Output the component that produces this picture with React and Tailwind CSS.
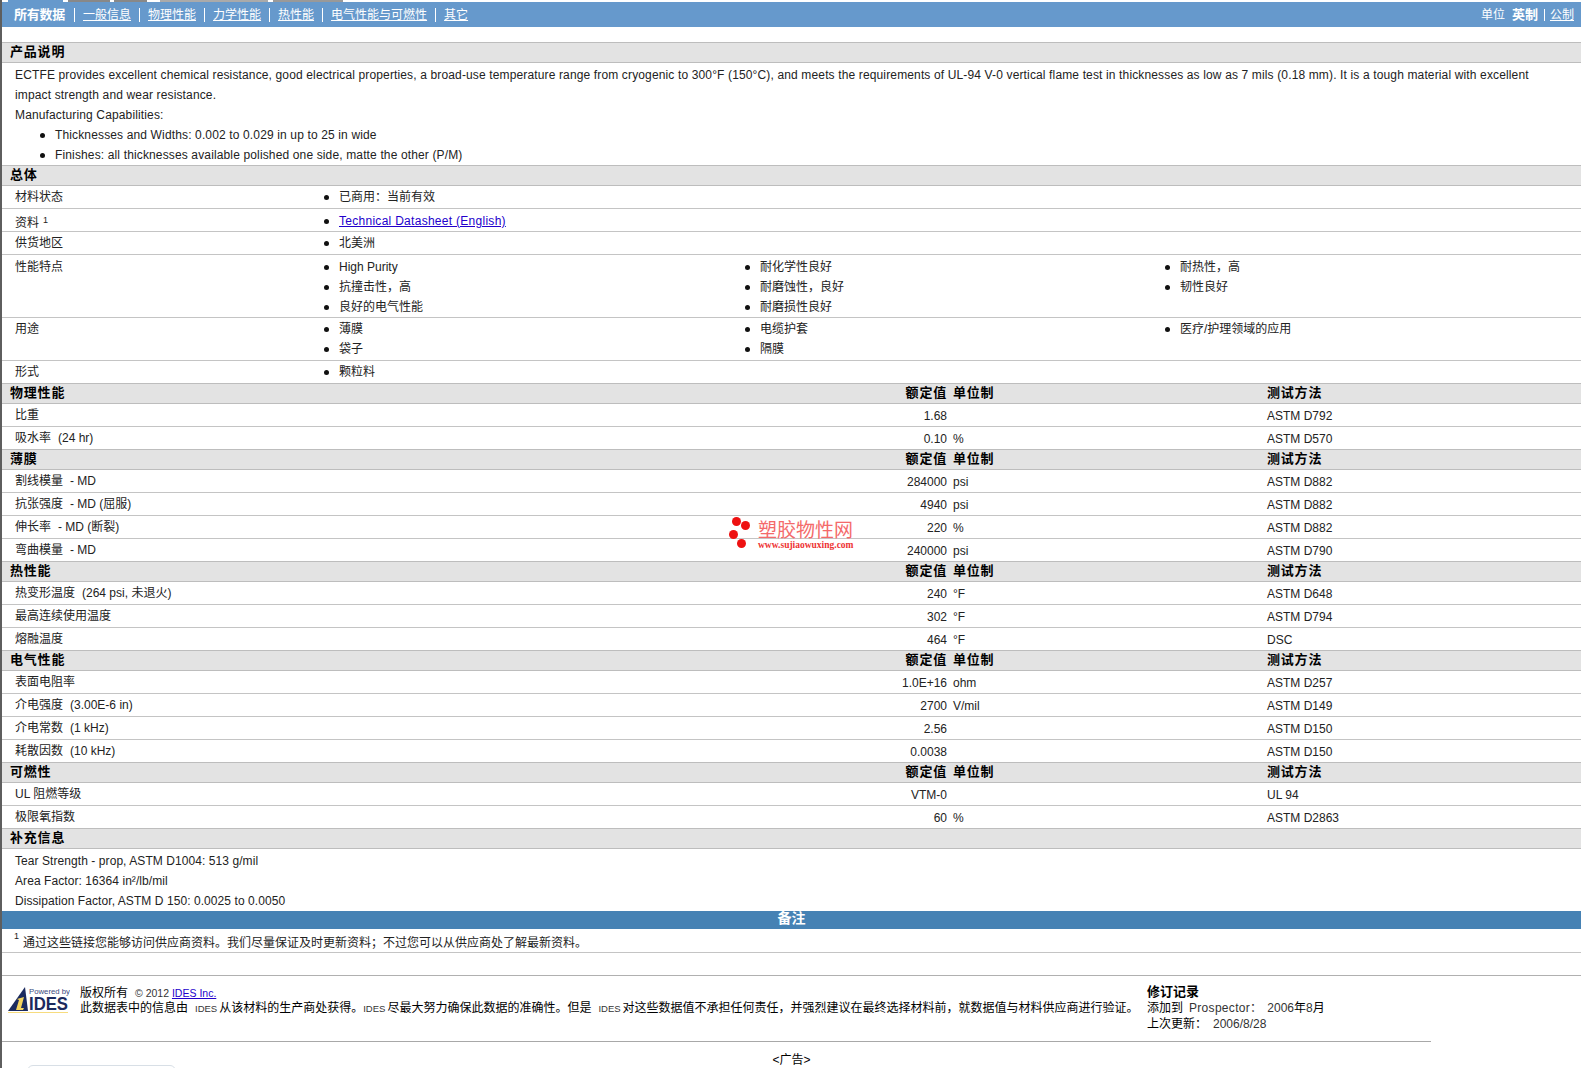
import React from "react";

const Dot = () => <span className="block w-[5px] h-[5px] rounded-full bg-[#111] shrink-0" />;

function Item({ children }) {
  return (
    <div className="flex items-center h-5 gap-[10px]">
      <Dot />
      <span>{children}</span>
    </div>
  );
}

function Header({ title, cols }) {
  return (
    <div className="flex items-center h-[21px] pb-px bg-[#e3e3e3] border-y border-[#bdbdbd] font-bold text-[13px] tracking-[0.8px] text-black">
      <span className="pl-2 w-[650px]">{title}</span>
      {cols && (
        <>
          <span className="w-[295px] text-right">额定值</span>
          <span className="w-[320px] pl-[6px]">单位制</span>
          <span>测试方法</span>
        </>
      )}
    </div>
  );
}

function Data({ label, extra, value, unit, method, last }) {
  return (
    <div className={last ? "flex items-center h-[22px]" : "flex items-center h-[23px] border-b border-[#c4c4c4]"}>
      <span className="pl-[13px] w-[650px]">
        {label}
        {extra && <span className="ml-[7px]">{extra}</span>}
      </span>
      <span className="w-[295px] text-right pt-[2px]">{value}</span>
      <span className="w-[320px] pl-[6px] pt-[2px]">{unit}</span>
      <span className="pt-[2px]">{method}</span>
    </div>
  );
}

function Spec({ label, sup, cols, h, last, pt, low }) {
  return (
    <div className={`flex ${h} ${pt} ${last ? "" : "border-b border-[#c4c4c4]"}`}>
      <div className={low ? "w-[322px] shrink-0 pl-[13px] leading-5 pt-[2px]" : "w-[322px] shrink-0 pl-[13px] leading-5"}>
        {label}
        {sup && <sup className="ml-[4px] text-[9px]">{sup}</sup>}
      </div>
      {cols.map((c, i) => (
        <div key={i} className={i === 0 ? "w-[421px] shrink-0" : i === 1 ? "w-[420px] shrink-0" : "flex-1"}>
          {c.map((t, j) => (
            <Item key={j}>{t}</Item>
          ))}
        </div>
      ))}
    </div>
  );
}

const Sep = () => <span className="w-px h-[14px] bg-white mx-[8px]" />;

const Section = ({ title, rows }) => (
  <>
    <Header title={title} cols />
    {rows.map((r, i) => (
      <Data key={i} {...r} last={i === rows.length - 1} />
    ))}
  </>
);

function Logo() {
  return (
    <svg width="62" height="28" viewBox="0 0 62 28" className="shrink-0">
      <polygon points="0,25 17,1 20,25" fill="#1b2a5e" />
      <polygon points="9,13 16,11 13,22 16,22 15,24 8,24 11,14" fill="#f4d35e" />
      <text x="21" y="8" fontSize="8" fill="#3a4a80" fontFamily="Liberation Sans" textLength="41" lengthAdjust="spacingAndGlyphs">Powered by</text>
      <text x="21" y="24" fontSize="18" fontWeight="700" fill="#1b2a5e" fontFamily="Liberation Sans" textLength="39" lengthAdjust="spacingAndGlyphs">IDES</text>
      <rect x="0" y="26" width="60" height="1" fill="#f7dc7e" />
    </svg>
  );
}

export default function App() {
  return (
    <div className="relative w-[1581px] h-[1068px] overflow-hidden bg-white border-l-2 border-[#5e5e5e] text-[12px] text-[#222] font-['Liberation_Sans','Noto_Sans_CJK_SC',sans-serif]">
      <div className="flex h-[2px] pl-[6px]">
        <span className="w-[55px] bg-[#6699cc]" />
        <span className="w-[42px] ml-[5px] bg-[#888888]" />
        <span className="w-[33px] ml-[4px] bg-[#888888]" />
        <span className="w-[108px] ml-[13px] bg-[#aaaaaa]" />
        <span className="w-[70px] ml-[5px] bg-[#999999]" />
      </div>
      <nav className="flex items-center justify-between h-[25px] bg-[#6699cc] text-white pl-3 pr-[7px]">
        <div className="flex items-center">
          <span className="font-bold text-[13px] tracking-[-0.25px] w-[52px]">所有数据</span>
          <Sep />
          <a className="underline">一般信息</a>
          <Sep />
          <a className="underline">物理性能</a>
          <Sep />
          <a className="underline">力学性能</a>
          <Sep />
          <a className="underline">热性能</a>
          <Sep />
          <a className="underline">电气性能与可燃性</a>
          <Sep />
          <a className="underline">其它</a>
        </div>
        <div className="flex items-center">
          <span className="mr-[7px]">单位</span>
          <span className="font-bold text-[13px]">英制</span>
          <span className="w-px h-[12px] bg-white ml-[6px] mr-[5px]" />
          <a className="underline">公制</a>
        </div>
      </nav>
      <div className="h-[15px]" />

      <Header title="产品说明" />
      <div className="h-[102px] pt-[2px] pl-[13px] leading-5 tracking-[0.14px]">
        <div>
          ECTFE provides excellent chemical resistance, good electrical properties, a broad-use temperature range from cryogenic to 300°F (150°C), and meets the requirements of UL-94 V-0 vertical flame test in thicknesses as low as 7 mils (0.18 mm). It is a tough material with excellent
          <br />
          impact strength and wear resistance.
        </div>
        <div>Manufacturing Capabilities:</div>
        <div className="flex items-center h-5 pl-[25px] gap-[10px]"><Dot />Thicknesses and Widths: 0.002 to 0.029 in up to 25 in wide</div>
        <div className="flex items-center h-5 pl-[25px] gap-[10px]"><Dot />Finishes: all thicknesses available polished one side, matte the other (P/M)</div>
      </div>

      <Header title="总体" />
      <Spec h="h-[23px]" pt="pt-px" label="材料状态" cols={[["已商用：当前有效"]]} />
      <Spec h="h-[23px]" pt="pt-[2px]" low label="资料" sup="1" cols={[[<a className="underline text-[#2200cc] tracking-[0.28px]">Technical Datasheet (English)</a>]]} />
      <Spec h="h-[23px]" pt="pt-px" label="供货地区" cols={[["北美洲"]]} />
      <Spec h="h-[63px]" pt="pt-[2px]" label="性能特点" cols={[["High Purity", "抗撞击性，高", "良好的电气性能"], ["耐化学性良好", "耐磨蚀性，良好", "耐磨损性良好"], ["耐热性，高", "韧性良好"]]} />
      <Spec h="h-[43px]" pt="pt-px" label="用途" cols={[["薄膜", "袋子"], ["电缆护套", "隔膜"], ["医疗/护理领域的应用"]]} />
      <Spec h="h-[22px]" pt="pt-px" label="形式" last cols={[["颗粒料"]]} />

      <Section title="物理性能" rows={[
        { label: "比重", value: "1.68", method: "ASTM D792" },
        { label: "吸水率", extra: "(24 hr)", value: "0.10", unit: "%", method: "ASTM D570" },
      ]} />
      <Section title="薄膜" rows={[
        { label: "割线模量", extra: "- MD", value: "284000", unit: "psi", method: "ASTM D882" },
        { label: "抗张强度", extra: "- MD (屈服)", value: "4940", unit: "psi", method: "ASTM D882" },
        { label: "伸长率", extra: "- MD (断裂)", value: "220", unit: "%", method: "ASTM D882" },
        { label: "弯曲模量", extra: "- MD", value: "240000", unit: "psi", method: "ASTM D790" },
      ]} />
      <Section title="热性能" rows={[
        { label: "热变形温度", extra: "(264 psi, 未退火)", value: "240", unit: "°F", method: "ASTM D648" },
        { label: "最高连续使用温度", value: "302", unit: "°F", method: "ASTM D794" },
        { label: "熔融温度", value: "464", unit: "°F", method: "DSC" },
      ]} />
      <Section title="电气性能" rows={[
        { label: "表面电阻率", value: "1.0E+16", unit: "ohm", method: "ASTM D257" },
        { label: "介电强度", extra: "(3.00E-6 in)", value: "2700", unit: "V/mil", method: "ASTM D149" },
        { label: "介电常数", extra: "(1 kHz)", value: "2.56", method: "ASTM D150" },
        { label: "耗散因数", extra: "(10 kHz)", value: "0.0038", method: "ASTM D150" },
      ]} />
      <Section title="可燃性" rows={[
        { label: "UL 阻燃等级", value: "VTM-0", method: "UL 94" },
        { label: "极限氧指数", value: "60", unit: "%", method: "ASTM D2863" },
      ]} />

      <Header title="补充信息" />
      <div className="h-[62px] pt-[2px] pl-[13px] leading-5 tracking-[0.07px]">
        <div>Tear Strength - prop, ASTM D1004: 513 g/mil</div>
        <div>Area Factor: 16364 in²/lb/mil</div>
        <div>Dissipation Factor, ASTM D 150: 0.0025 to 0.0050</div>
      </div>

      <div className="flex items-center justify-center h-[18px] pb-[3px] bg-[#4682b4] text-white font-bold text-[14px]">备注</div>
      <div className="flex items-center h-[24px] pt-[5px] pl-[12px] border-b border-[#c4c4c4]">
        <sup className="text-[9px] mr-[4px] -mt-[5px]">1</sup>
        <span>通过这些链接您能够访问供应商资料。我们尽量保证及时更新资料；不过您可以从供应商处了解最新资料。</span>
      </div>
      <div className="h-[23px] border-b border-[#b0b0b0]" />

      <footer className="flex h-[66px] w-[1429px] pt-2 border-b border-[#a8a8a8] leading-4 text-black">
        <div className="flex pl-[6px] pt-[2px] w-[1145px] shrink-0">
          <Logo />
          <div className="pl-[10px] -mt-px">
            <div>
              版权所有<span className="ml-[7px] text-[#333] text-[10.5px]">© 2012 </span>
              <a className="underline text-[#2200cc] text-[10.5px]">IDES Inc.</a>
            </div>
            <div className="whitespace-nowrap -mt-px">
              此数据表中的信息由<span className="ml-[7px] mr-[2px] text-[#333] text-[9.5px]">IDES</span>从该材料的生产商处获得。<span className="mr-[2px] text-[#333] text-[9.5px]">IDES</span>尽最大努力确保此数据的准确性。但是<span className="ml-[7px] mr-[2px] text-[#333] text-[9.5px]">IDES</span>对这些数据值不承担任何责任，并强烈建议在最终选择材料前，就数据值与材料供应商进行验证。
            </div>
          </div>
        </div>
        <div>
          <div className="font-bold text-[13px]">修订记录</div>
          <div>添加到<span className="ml-[6px] mr-[5px] text-[#333] tracking-[0.3px]">Prospector：</span><span className="text-[#333]">2006</span>年<span className="text-[#333]">8</span>月</div>
          <div>上次更新：<span className="ml-[6px] text-[#333]">2006/8/28</span></div>
        </div>
      </footer>

      <div className="text-center w-[1579px] pt-[10px] leading-4 text-black">&lt;广告&gt;</div>
      <div className="ml-[25px] mt-[-3px] w-[149px] h-[10px] rounded-t-[6px] border border-[#d8dfe6] bg-white" />

      <div className="absolute left-[727px] top-[516px] w-[132px] h-[36px]">
        <span className="absolute left-[3px] top-[1px] w-[9px] h-[9px] rounded-full bg-[#ee1111]" />
        <span className="absolute left-[12px] top-[5px] w-[9px] h-[9px] rounded-full bg-[#ee1111]" />
        <span className="absolute left-0 top-[14px] w-[9px] h-[9px] rounded-full bg-[#ee1111]" />
        <span className="absolute left-[8px] top-[23px] w-[9px] h-[9px] rounded-full bg-[#ee1111]" />
        <span className="absolute left-[29px] top-[3px] text-[19px] leading-[24px] text-[#f46a6a] whitespace-nowrap">塑胶物性网</span>
        <span className="absolute left-[29px] top-[23px] text-[9.5px] leading-[12px] font-bold text-[#ee3333] whitespace-nowrap font-['Liberation_Serif',serif]">www.sujiaowuxing.com</span>
      </div>
    </div>
  );
}
